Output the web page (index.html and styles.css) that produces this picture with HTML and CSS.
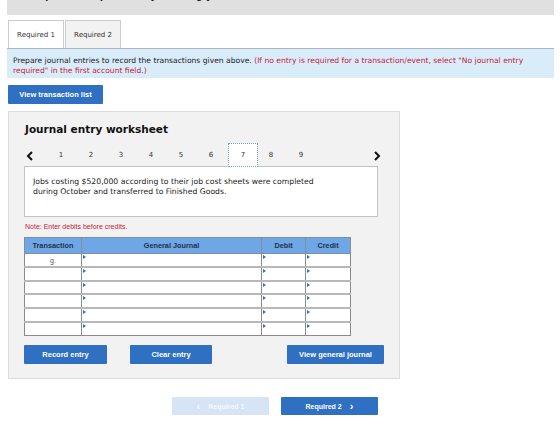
FILE: index.html
```html
<!DOCTYPE html>
<html>
<head>
<meta charset="utf-8">
<link rel="stylesheet" href="styles.css">
</head>
<body>
<div class="page">
  <div class="topbar"><p>Complete this question by entering your answers in the tabs below.</p></div>
  <div class="tabs">
    <div class="tab active">Required 1</div>
    <div class="tab">Required 2</div>
  </div>
  <div class="instructions">
    Prepare journal entries to record the transactions given above. <span class="red">(If no entry is required for a transaction/event, select "No journal entry required" in the first account field.)</span>
  </div>
  <div class="btn-row-top"><button class="btn btn-list">View transaction list</button></div>
  <div class="panel">
    <h2 class="title">Journal entry worksheet</h2>
    <div class="nav">
      <span class="arrow">
        <svg width="8" height="10" viewBox="0 0 8 10"><path d="M6 1 L2 5 L6 9" fill="none" stroke="#111" stroke-width="2"/></svg>
      </span>
      <div class="nums">
        <span class="num">1</span><span class="num">2</span><span class="num">3</span><span class="num">4</span><span class="num">5</span><span class="num">6</span><span class="num current">7</span><span class="num">8</span><span class="num">9</span>
      </div>
      <span class="arrow right">
        <svg width="8" height="10" viewBox="0 0 8 10"><path d="M2 1 L6 5 L2 9" fill="none" stroke="#111" stroke-width="2"/></svg>
      </span>
    </div>
    <div class="desc">Jobs costing $520,000 according to their job cost sheets were completed during October and transferred to Finished Goods.</div>
    <p class="note">Note: Enter debits before credits.</p>
    <table class="journal">
      <thead>
        <tr><th class="c-tr">Transaction</th><th class="c-gj">General Journal</th><th class="c-dr">Debit</th><th class="c-cr">Credit</th></tr>
      </thead>
      <tbody>
        <tr><td class="tr">g.</td><td class="in"></td><td class="in"></td><td class="in"></td></tr>
        <tr><td class="tr"></td><td class="in"></td><td class="in"></td><td class="in"></td></tr>
        <tr><td class="tr"></td><td class="in"></td><td class="in"></td><td class="in"></td></tr>
        <tr><td class="tr"></td><td class="in"></td><td class="in"></td><td class="in"></td></tr>
        <tr><td class="tr"></td><td class="in"></td><td class="in"></td><td class="in"></td></tr>
        <tr><td class="tr"></td><td class="in"></td><td class="in"></td><td class="in"></td></tr>
      </tbody>
    </table>
    <div class="actions">
      <button class="btn btn-record">Record entry</button>
      <button class="btn btn-clear">Clear entry</button>
      <button class="btn btn-view">View general journal</button>
    </div>
  </div>
  <div class="bottom-nav">
    <button class="btn btn-prev"><span class="chev">&lsaquo;</span> Required 1</button>
    <button class="btn btn-next">Required 2 <span class="chev">&rsaquo;</span></button>
  </div>
</div>
</body>
</html>
```
FILE: styles.css
```css
* { box-sizing: border-box; }
body {
  margin: 0;
  background: #fff;
  font-family: "DejaVu Sans", Verdana, sans-serif;
  color: #222;
}
.page {
  width: 560px;
  padding: 0 6px 0 7px;
}
.topbar {
  height: 15px;
  background: #e0e0e0;
  overflow: hidden;
}
.topbar p {
  margin: -9px 0 0 16px;
  font-size: 9px;
  font-weight: bold;
  color: #222;
}
.tabs {
  display: flex;
  margin-top: 5px;
  padding-left: 1px;
  gap: 1px;
}
.tab {
  height: 28px;
  width: 56px;
  border: 1px solid #ccc;
  border-bottom: none;
  background: #f2f2f2;
  font-size: 7px;
  display: flex;
  align-items: center;
  justify-content: center;
  color: #333;
}
.tab.active {
  background: #fff;
}
.instructions {
  background: #d9ecf9;
  border-top: 1px solid #a9b4c0;
  height: 30px;
  padding: 7px 6px 0 6px;
  font-size: 7.6px;
  line-height: 10px;
  color: #222;
}
.red { color: #c8203a; }
.btn-row-top {
  display: flex;
  padding: 7px 0 0 1px;
}
.btn {
  border: none;
  background: #2f70c3;
  color: #fff;
  font-family: "Liberation Sans", Arial, sans-serif;
  font-weight: bold;
  font-size: 7.5px;
  padding: 0;
  border-radius: 1px;
  display: inline-flex;
  align-items: center;
  justify-content: center;
}
.btn-list {
  width: 95px;
  height: 19px;
}
.panel {
  margin-top: 7px;
  margin-left: 1px;
  width: 392px;
  height: 268px;
  background: #f2f2f2;
  border: 1px solid #dcdcdc;
  padding: 0 0 0 15px;
}
.title {
  margin: 11px 0 0 1px;
  font-size: 10.5px;
  font-weight: bold;
  color: #111;
  line-height: 13px;
}
.nav {
  display: flex;
  align-items: center;
  height: 24px;
  margin-top: 7px;
  position: relative;
  z-index: 1;
}
.arrow {
  width: 12px;
  display: flex;
  justify-content: center;
  padding-top: 1px;
}
.nums {
  display: flex;
  margin-left: 10px;
}
.num {
  width: 30px;
  height: 24px;
  display: flex;
  align-items: center;
  justify-content: center;
  font-size: 7px;
  color: #333;
}
.num.current {
  background: #fff;
  border: 1px dotted #7a9cc8;
  margin-left: 2px;
  margin-right: -2px;
}
.arrow.right {
  margin-left: 55px;
}
.desc {
  margin-top: -1px;
  width: 354px;
  height: 51px;
  background: #fff;
  border: 1px solid #c4c4c4;
  padding: 10px 40px 0 8px;
  font-size: 7.7px;
  line-height: 10px;
  color: #222;
}
.note {
  margin: 6px 0 0 1px;
  font-family: "Liberation Sans", Arial, sans-serif;
  font-size: 7px;
  color: #c8203a;
  line-height: 8px;
}
.journal {
  margin-top: 6px;
  border-collapse: collapse;
  width: 327px;
  font-family: "Liberation Sans", Arial, sans-serif;
}
.journal th {
  background: #6ea6e6;
  height: 16px;
  font-size: 7.3px;
  font-weight: bold;
  color: #22324a;
  border: 1px solid #7f8ea0;
  padding: 0;
}
.c-tr { width: 57px; }
.c-gj { width: 181px; }
.c-dr { width: 44px; }
.c-cr { width: 45px; }
.journal td {
  height: 13.67px;
  background: #fff;
  border-left: 1px solid #8a8a8a;
  border-right: 1px solid #8a8a8a;
  border-bottom: 2px solid #b8b8b8;
  padding: 0;
  font-size: 7px;
  color: #555;
}
.journal tr:last-child td { border-bottom: 1px solid #8a8a8a; }
.journal td.tr {
  text-align: center;
}
.journal td.in {
  position: relative;
}
.journal td.in::before {
  content: "";
  position: absolute;
  left: 1px;
  top: 1px;
  border-left: 3px solid #2f70c3;
  border-top: 2px solid transparent;
  border-bottom: 2px solid transparent;
}
.actions {
  display: flex;
  margin-top: 9px;
}
.btn-record, .btn-clear {
  width: 83px;
  height: 19px;
}
.btn-clear {
  margin-left: 23px;
  width: 82px;
}
.btn-view {
  margin-left: 75px;
  width: 97px;
  height: 19px;
}
.bottom-nav {
  display: flex;
  margin-top: 18px;
  padding-left: 165px;
}
.btn-prev, .btn-next {
  width: 97px;
  height: 18px;
  gap: 8px;
  font-size: 7px;
}
.btn-prev {
  background: #d6e4f5;
  color: #f4f8fd;
}
.btn-next {
  margin-left: 12px;
}
.chev {
  font-size: 11px;
  line-height: 10px;
  margin-top: -1px;
}
```
